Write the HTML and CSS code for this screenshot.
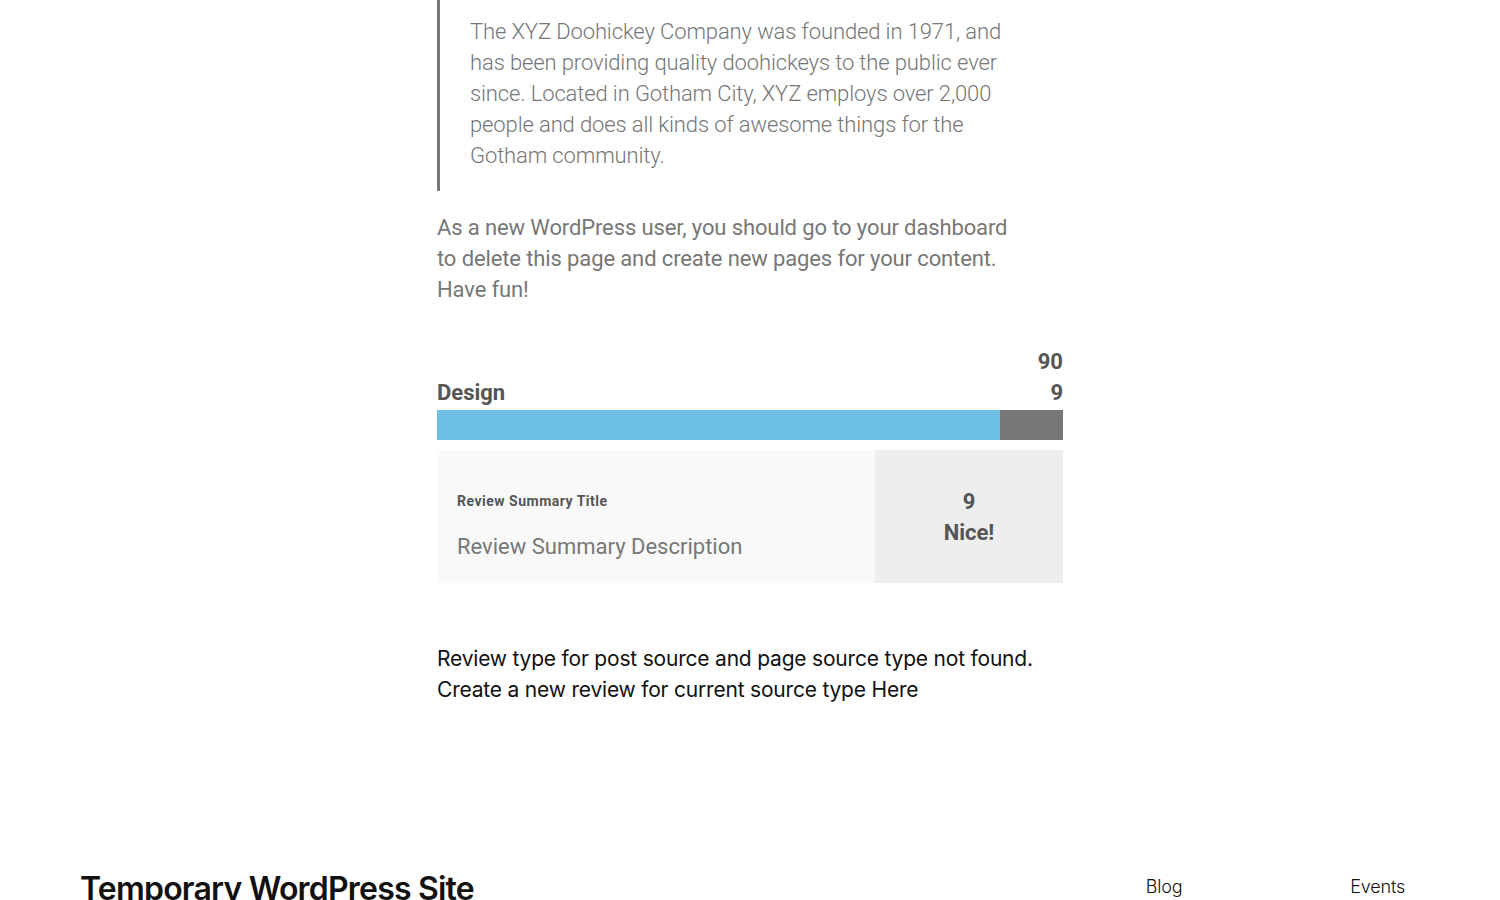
FILE: index.html
```html
<!DOCTYPE html>
<html lang="en">
<head>
  <meta charset="UTF-8">
  <meta name="viewport" content="width=device-width, initial-scale=1.0">
  <title>Temporary WordPress Site</title>
  <link rel="stylesheet" href="styles.css">
</head>
<body>
  <main class="content">
    <blockquote class="quote">
      <p>The XYZ Doohickey Company was founded in 1971, and has been providing quality doohickeys to the public ever since. Located in Gotham City, XYZ employs over 2,000 people and does all kinds of awesome things for the Gotham community.</p>
    </blockquote>
    <p class="intro">As a new WordPress user, you should go to your dashboard to delete this page and create new pages for your content. Have fun!</p>

    <!-- Review box -->
    <div class="review">
      <div class="review-total">90</div>
      <div class="criteria">
        <span class="criteria-name">Design</span>
        <span class="criteria-score">9</span>
      </div>
      <div class="bar">
        <div class="bar-fill" style="width: 90%"></div>
      </div>
      <div class="summary">
        <div class="summary-text">
          <div class="summary-title">Review Summary Title</div>
          <div class="summary-desc">Review Summary Description</div>
        </div>
        <div class="summary-score">
          <div>9</div>
          <div>Nice!</div>
        </div>
      </div>
    </div>

    <p class="notice">Review type for post source and page source type not found. Create a new review for current source type <a href="#">Here</a></p>
  </main>

  <footer class="site-footer">
    <div class="site-title">Temporary WordPress Site</div>
    <nav class="footer-nav">
      <a href="#">Blog</a>
      <a href="#">Events</a>
    </nav>
  </footer>
</body>
</html>
```

FILE: styles.css
```css
/* General Styles */
body {
  margin: 0;
  background: #fff;
  font-family: Roboto, 'Liberation Sans', sans-serif;
  overflow: hidden;
}

.content {
  width: 626px;
  margin: 0 auto;
}

.quote {
  margin: 0;
  padding: 16px 0 20px 30px;
  border-left: 3px solid #767676;
}

.quote p {
  margin: 0;
  width: 545px;
  font-size: 22px;
  font-weight: 300;
  line-height: 31px;
  letter-spacing: -0.12px;
  color: #767676;
}

.intro {
  margin: 21px 0 0;
  width: 585px;
  font-size: 22px;
  line-height: 31px;
  letter-spacing: -0.12px;
  color: #777;
}

/* Review */
.review {
  margin-top: 41px;
  color: #555;
}

.review-total {
  text-align: right;
  font-size: 22px;
  font-weight: 700;
  line-height: 31px;
}

.criteria {
  display: flex;
  justify-content: space-between;
  font-size: 22px;
  font-weight: 700;
  line-height: 31px;
}

.bar {
  margin-top: 2px;
  height: 30px;
  background: #777;
}

.bar-fill {
  height: 100%;
  background: #6dbfe3;
}

.summary {
  display: flex;
  margin-top: 10px;
  height: 133px;
}

.summary-text {
  flex: 1;
  background: #f9f9f9;
  padding: 41px 20px 0;
}

.summary-title {
  font-size: 14px;
  font-weight: 700;
  line-height: 20px;
  letter-spacing: 0.5px;
}

.summary-desc {
  margin-top: 20px;
  font-size: 22px;
  line-height: 31px;
  color: #777;
}

.summary-score {
  width: 188px;
  background: #eee;
  display: flex;
  flex-direction: column;
  justify-content: center;
  align-items: center;
  font-size: 22px;
  font-weight: 700;
  line-height: 31px;
}

.notice {
  margin: 60px 0 0;
  font-family: Inter, 'Noto Sans', sans-serif;
  font-size: 21px;
  line-height: 31px;
  letter-spacing: -0.2px;
  color: #111;
}

.notice a {
  color: inherit;
  text-decoration: none;
}

/* Footer */
.site-footer {
  display: flex;
  justify-content: space-between;
  align-items: flex-start;
  margin-top: 164px;
  padding: 0 95px 0 80px;
  font-family: Inter, 'Noto Sans', sans-serif;
  color: #111;
}

.site-title {
  font-size: 32px;
  font-weight: 600;
  letter-spacing: -0.8px;
  line-height: 40px;
}

.footer-nav {
  display: flex;
  gap: 168px;
  padding-top: 7px;
}

.footer-nav a {
  color: inherit;
  text-decoration: none;
  font-size: 18px;
  font-weight: 300;
  letter-spacing: -0.2px;
}
```
